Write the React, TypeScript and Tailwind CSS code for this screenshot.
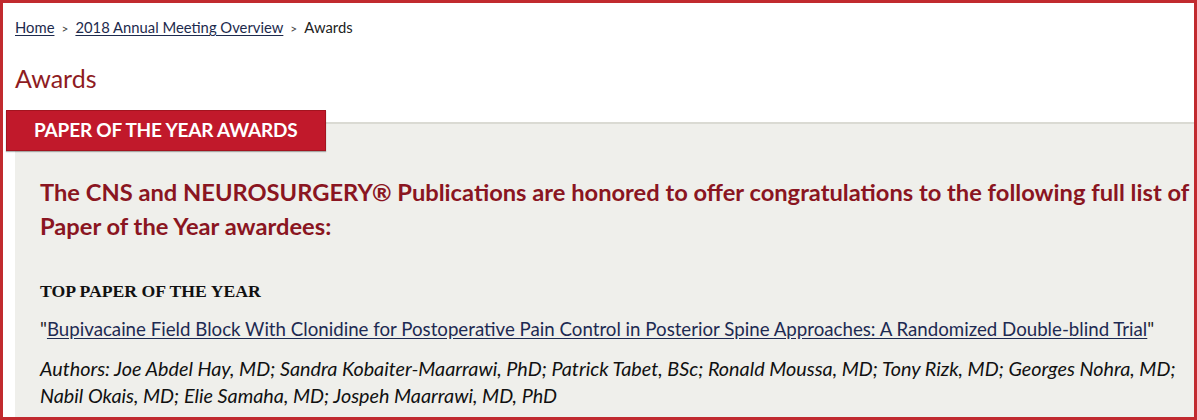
import React from "react";

export default function App() {
  const lato = { fontFamily: "Lato, 'Open Sans', sans-serif" };
  return (
    <div className="w-[1197px] h-[420px] box-border border-[3px] border-[#c12a2f] bg-white overflow-hidden" style={lato}>
      <div className="pl-[12px] pt-[14px] text-[14.8px] leading-[20px] text-[#222]">
        <a className="text-[#1d2a4d] underline underline-offset-2" href="#">Home</a>
        <span className="mx-[7px] text-[12px] text-[#444]">&gt;</span>
        <a className="text-[#1d2a4d] underline underline-offset-2" href="#">2018 Annual Meeting Overview</a>
        <span className="mx-[7px] text-[12px] text-[#444]">&gt;</span>
        <span>Awards</span>
      </div>
      <h1 className="pl-[12px] mt-[24px] text-[25px] leading-[30px] text-[#8e1b22] font-normal">Awards</h1>
      <div className="mt-[17px] relative z-10 ml-[3px] w-[320px] h-[41px] bg-[#c1192b] border border-[#a3141f] shadow-[0_1px_1px_rgba(0,0,0,0.3)] flex items-center pl-[27px]">
        <span className="text-white font-bold text-[19px] tracking-[-0.2px]">PAPER OF THE YEAR AWARDS</span>
      </div>
      <div className="-mt-[29px] ml-[12px] h-[300px] bg-[#efefeb] border-t-[2px] border-[#dadad3] pl-[25px] pr-[2px] pt-[51px]">
        <h2 className="text-[23.7px] leading-[34px] font-bold text-[#8a1521]">
          The CNS and NEUROSURGERY® Publications are honored to offer congratulations to the following full list of Paper of the Year awardees:
        </h2>
        <h3 className="mt-[36px] text-[17.7px] leading-[24px] font-bold text-[#111]" style={{ fontFamily: "'Liberation Serif', serif" }}>
          TOP PAPER OF THE YEAR
        </h3>
        <p className="mt-[13px] text-[18.7px] leading-[26px] text-[#222]">
          "<a className="text-[#1d2a52] underline underline-offset-2" href="#">Bupivacaine Field Block With Clonidine for Postoperative Pain Control in Posterior Spine Approaches: A Randomized Double-blind Trial</a>"
        </p>
        <p className="mt-[13px] text-[19.8px] leading-[27px] italic font-normal text-[#111] pr-[10px]">
          Authors: Joe Abdel Hay, MD; Sandra Kobaiter-Maarrawi, PhD; Patrick Tabet, BSc; Ronald Moussa, MD; Tony Rizk, MD; Georges Nohra, MD; Nabil Okais, MD; Elie Samaha, MD; Jospeh Maarrawi, MD, PhD
        </p>
      </div>
    </div>
  );
}
